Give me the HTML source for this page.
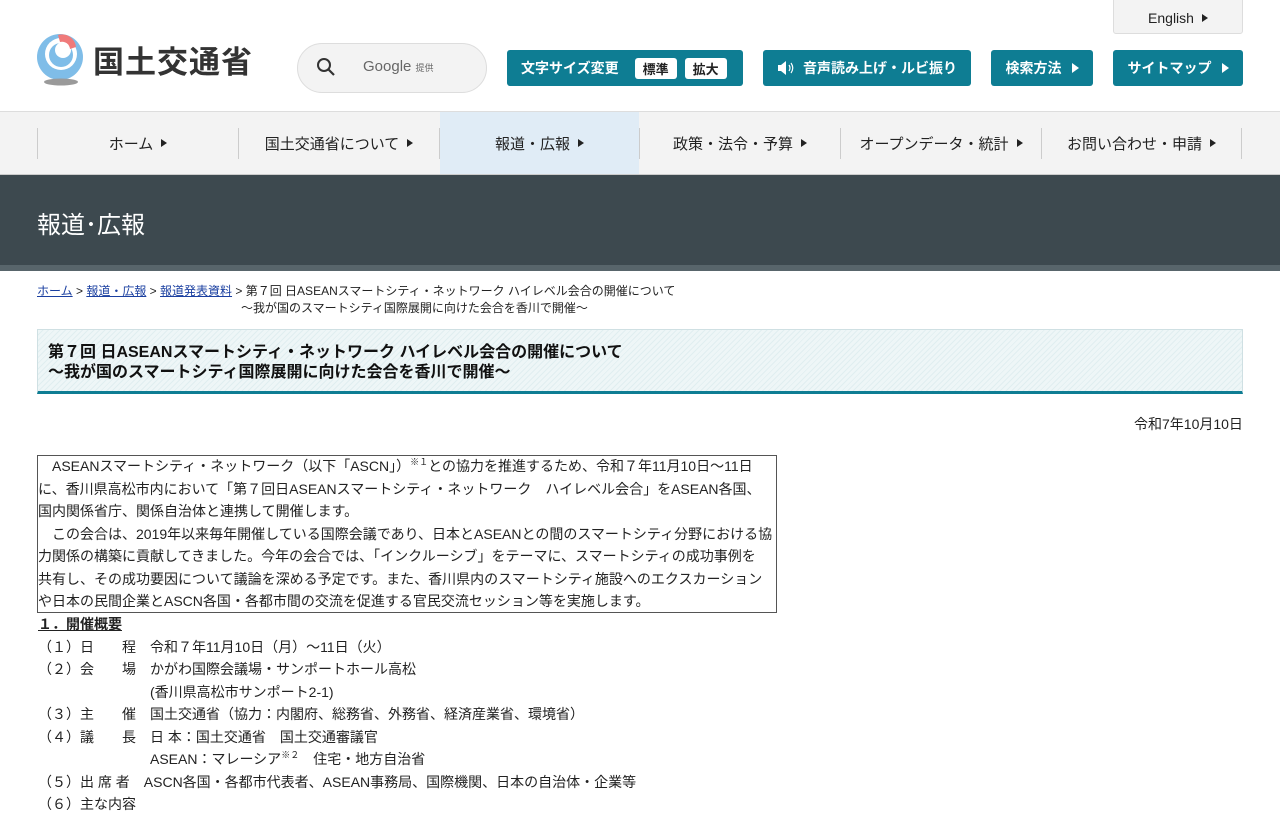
<!DOCTYPE html>
<html><head><meta charset="utf-8"><style>
*{margin:0;padding:0;box-sizing:border-box}
body{width:1280px;height:800px;overflow:hidden;background:#fff;font-family:"Liberation Sans","Noto Sans CJK JP",sans-serif;color:#222;position:relative}
.abs{position:absolute}
.btn{position:absolute;top:50px;height:36px;background:#0e7d93;color:#fff;border-radius:3px;font-size:14px;font-weight:bold;display:flex;align-items:center;justify-content:center}
.tri{display:inline-block;width:0;height:0;border-left:7px solid #fff;border-top:5px solid transparent;border-bottom:5px solid transparent;margin-left:10px}
.tri.d{border-left-color:#222;border-left-width:6px;border-top-width:4px;border-bottom-width:4px;margin-left:8px}
.nav{position:absolute;top:111px;left:0;width:1280px;height:64px;background:#f3f3f3;border-top:1px solid #ddd;border-bottom:1px solid #ccc}
.ni{position:absolute;top:0;height:62px;display:flex;align-items:center;justify-content:center;font-size:15px;color:#222}
.sep{position:absolute;top:16px;width:1px;height:31px;background:#ccc}
.body p{font-size:14px;line-height:22.5px;height:22.5px;white-space:nowrap}
sup{font-size:9px;line-height:0;vertical-align:0;position:relative;top:-6px}
a{color:#1a3fa0}
</style></head><body>
<svg class="abs" style="left:36px;top:33px" width="52" height="54" viewBox="0 0 52 54">
<circle cx="24" cy="24" r="23" fill="#7fbde8"/>
<circle cx="25" cy="21" r="16" fill="#fff"/>
<circle cx="25" cy="22" r="12" fill="#7fbde8"/>
<circle cx="27" cy="17" r="8" fill="#fff"/>
<path d="M22 2 A14 14 0 0 1 40 14 L34 16 A8 8 0 0 0 24 9 Z" fill="#f07a7a"/>
<ellipse cx="25" cy="49" rx="17" ry="3.5" fill="#9a9a9a"/>
</svg>
<div class="abs" style="left:93px;top:37px;font-size:31px;font-weight:bold;color:#333;letter-spacing:1px">国土交通省</div>
<div class="abs" style="left:297px;top:43px;width:190px;height:50px;border:1px solid #ddd;border-radius:25px;background:#f3f3f3"></div>
<svg class="abs" style="left:316px;top:57px" width="20" height="20" viewBox="0 0 20 20"><circle cx="8" cy="8" r="6" fill="none" stroke="#333" stroke-width="2"/><line x1="12.5" y1="12.5" x2="18" y2="18" stroke="#333" stroke-width="2.2"/></svg>
<div class="abs" style="left:363px;top:58px;font-size:15px;color:#666">Google <span style="font-size:9px;color:#666">提供</span></div>
<div class="abs" style="left:1113px;top:-2px;width:130px;height:36px;background:#f3f3f3;border:1px solid #ddd;border-radius:0 0 3px 3px;display:flex;align-items:center;justify-content:center;font-size:14px;padding-top:4px">English<span class="tri d"></span></div>
<div class="btn" style="left:507px;width:236px;justify-content:flex-start;padding-left:14px">文字サイズ変更
<span style="background:#fff;color:#222;border-radius:3px;padding:1px 8px;margin-left:16px;font-size:13px">標準</span>
<span style="background:#fff;color:#222;border-radius:3px;padding:1px 8px;margin-left:8px;font-size:13px">拡大</span></div>
<div class="btn" style="left:763px;width:208px"><svg width="18" height="16" viewBox="0 0 18 16" style="margin-right:8px"><path d="M1 5h3l5-4v14l-5-4H1z" fill="#fff"/><path d="M12 5q2 3 0 6M14 3q3.5 5 0 10" stroke="#fff" fill="none" stroke-width="1.2"/></svg>音声読み上げ・ルビ振り</div>
<div class="btn" style="left:991px;width:102px">検索方法<span class="tri"></span></div>
<div class="btn" style="left:1113px;width:130px">サイトマップ<span class="tri"></span></div>
<div class="nav">
<div class="ni" style="left:440px;width:199px;background:#e0ecf6"></div>
<div class="sep" style="left:37px"></div><div class="sep" style="left:238px"></div><div class="sep" style="left:439px"></div><div class="sep" style="left:639px"></div><div class="sep" style="left:840px"></div><div class="sep" style="left:1041px"></div><div class="sep" style="left:1241px"></div>
<div class="ni" style="left:38px;width:200px">ホーム<span class="tri d"></span></div>
<div class="ni" style="left:239px;width:200px">国土交通省について<span class="tri d"></span></div>
<div class="ni" style="left:440px;width:199px">報道・広報<span class="tri d"></span></div>
<div class="ni" style="left:640px;width:200px">政策・法令・予算<span class="tri d"></span></div>
<div class="ni" style="left:841px;width:200px">オープンデータ・統計<span class="tri d"></span></div>
<div class="ni" style="left:1042px;width:199px">お問い合わせ・申請<span class="tri d"></span></div>
</div>
<div class="abs" style="left:0;top:175px;width:1280px;height:90px;background:#3d494f"></div>
<div class="abs" style="left:0;top:265px;width:1280px;height:6px;background:#58656b"></div>
<div class="abs" style="left:37px;top:205px;font-size:24px;color:#fff">報道･広報</div>
<div class="abs" style="left:37px;top:283px;font-size:12px;line-height:17px;color:#222;white-space:nowrap"><a href="#">ホーム</a> &gt; <a href="#">報道・広報</a> &gt; <a href="#">報道発表資料</a> &gt; 第７回 日ASEANスマートシティ・ネットワーク ハイレベル会合の開催について</div>
<div class="abs" style="left:241px;top:300px;font-size:12px;line-height:17px;white-space:nowrap">～我が国のスマートシティ国際展開に向けた会合を香川で開催～</div>
<div class="abs" style="left:37px;top:329px;width:1206px;height:65px;border:1px solid #cfe0e3;border-bottom:3px solid #0e7d93;background:repeating-linear-gradient(135deg,#eef6f7 0 3px,#e0eef0 3px 4px)"></div>
<div class="abs" style="left:48px;top:343px;font-size:16px;font-weight:bold;line-height:20px;white-space:nowrap;color:#111">第７回 日ASEANスマートシティ・ネットワーク ハイレベル会合の開催について<br>～我が国のスマートシティ国際展開に向けた会合を香川で開催～</div>
<div class="abs" style="left:1134px;top:414px;font-size:14px">令和7年10月10日</div>
<div class="abs" style="left:37px;top:455px;width:740px;height:158px;border:1px solid #555"></div>
<div class="abs body" style="left:38px;top:455px">
<p>　ASEANスマートシティ・ネットワーク（以下「ASCN」）<sup>※１</sup>との協力を推進するため、令和７年11月10日～11日</p>
<p>に、香川県高松市内において「第７回日ASEANスマートシティ・ネットワーク　ハイレベル会合」をASEAN各国、</p>
<p>国内関係省庁、関係自治体と連携して開催します。</p>
<p>　この会合は、2019年以来毎年開催している国際会議であり、日本とASEANとの間のスマートシティ分野における協</p>
<p>力関係の構築に貢献してきました。今年の会合では、「インクルーシブ」をテーマに、スマートシティの成功事例を</p>
<p>共有し、その成功要因について議論を深める予定です。また、香川県内のスマートシティ施設へのエクスカーション</p>
<p>や日本の民間企業とASCN各国・各都市間の交流を促進する官民交流セッション等を実施します。</p>
</div>
<div class="abs body" style="left:38px;top:613px">
<p style="font-weight:bold;text-decoration:underline">１．開催概要</p>
<p>（１）日　　程　令和７年11月10日（月）～11日（火）</p>
<p>（２）会　　場　かがわ国際会議場・サンポートホール高松</p>
<p>　　　　　　　　(香川県高松市サンポート2-1)</p>
<p>（３）主　　催　国土交通省（協力：内閣府、総務省、外務省、経済産業省、環境省）</p>
<p>（４）議　　長　日 本：国土交通省　国土交通審議官</p>
<p>　　　　　　　　ASEAN：マレーシア<sup>※２</sup>　住宅・地方自治省</p>
<p>（５）出 席 者　ASCN各国・各都市代表者、ASEAN事務局、国際機関、日本の自治体・企業等</p>
<p>（６）主な内容</p>
</div>
</body></html>
